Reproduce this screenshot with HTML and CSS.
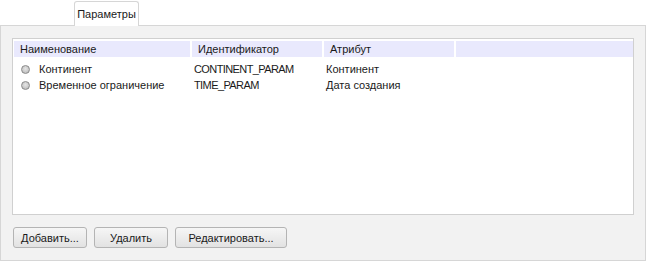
FILE: index.html
```html
<!DOCTYPE html>
<html>
<head>
    <title>Параметры</title>
    <link rel="stylesheet" href="styles.css">
</head>
<body>
    <div class="tabs">
        <div class="tab">Параметры</div>
    </div>
    <div class="panel">
        <div class="list">
            <div class="row header">
                <div class="cell c1">Наименование</div>
                <div class="cell c2">Идентификатор</div>
                <div class="cell c3">Атрибут</div>
                <div class="cell c4"></div>
            </div>
            <div class="body">
                <div class="row">
                    <div class="cell c1"><span class="radio"></span>Континент</div>
                    <div class="cell c2">CONTINENT_PARAM</div>
                    <div class="cell c3">Континент</div>
                </div>
                <div class="row">
                    <div class="cell c1"><span class="radio"></span>Временное ограничение</div>
                    <div class="cell c2">TIME_PARAM</div>
                    <div class="cell c3">Дата создания</div>
                </div>
            </div>
        </div>
        <div class="buttons">
            <button class="btn btn-add">Добавить...</button>
            <button class="btn btn-del">Удалить</button>
            <button class="btn btn-edit">Редактировать...</button>
        </div>
    </div>
</body>
</html>
```

FILE: styles.css
```css
body {
    margin: 0;
    background-color: #fff;
    font-family: "Liberation Sans", Arial, sans-serif;
    font-size: 11px;
    color: #1a1a1a;
}
.tabs {
    display: flex;
    padding-left: 74px;
    height: 25px;
    position: relative;
    z-index: 1;
}
.tab {
    width: 65px;
    height: 25px;
    box-sizing: border-box;
    border: 1px solid #d6d6d6;
    border-bottom: none;
    border-radius: 3px 3px 0 0;
    background-color: #fff;
    display: flex;
    align-items: center;
    justify-content: center;
    margin-top: 1px;
}
.panel {
    width: 646px;
    height: 236px;
    box-sizing: border-box;
    border: 1px solid #d6d6d6;
    background-color: #f2f2f2;
    padding: 12px 11px 0 11px;
}
.list {
    height: 177px;
    box-sizing: border-box;
    border: 1px solid #d0d0d0;
    background-color: #fff;
    padding: 2px 0 0 1px;
}
.row {
    display: flex;
    height: 16px;
    align-items: center;
}
.header .cell {
    background-color: #e9e9fd;
    height: 16px;
    line-height: 17px;
    margin-right: 2px;
    padding-left: 6px;
    box-sizing: border-box;
}
.body {
    padding-top: 4px;
}
.cell {
    white-space: nowrap;
    box-sizing: border-box;
    display: flex;
    align-items: center;
}
.c1 { width: 176px; }
.c2 { width: 130px; }
.c3 { width: 130px; }
.header .c4 { width: 177px; margin-right: 0; }
.body .c1 { width: 178px; padding-left: 7px; }
.body .c2 { width: 132px; padding-left: 2px; letter-spacing: -0.6px; }
.body .c3 { width: 132px; padding-left: 2px; }
.radio {
    width: 9px;
    height: 9px;
    box-sizing: border-box;
    border-radius: 50%;
    border: 1px solid #8a8a8a;
    background: radial-gradient(circle at 50% 40%, #e6e6e6, #b4b4b4);
    margin-right: 9px;
}
.buttons {
    display: flex;
    gap: 7px;
    padding-top: 12px;
    padding-left: 1px;
}
.btn {
    height: 21px;
    box-sizing: border-box;
    border: 1px solid #b4b4b4;
    border-radius: 3px;
    background: linear-gradient(#f6f6f6, #e2e2e2);
    font-family: inherit;
    font-size: 11px;
    color: #1a1a1a;
    padding: 0;
}
.btn-add { width: 74px; }
.btn-del { width: 74px; }
.btn-edit { width: 112px; }
```
